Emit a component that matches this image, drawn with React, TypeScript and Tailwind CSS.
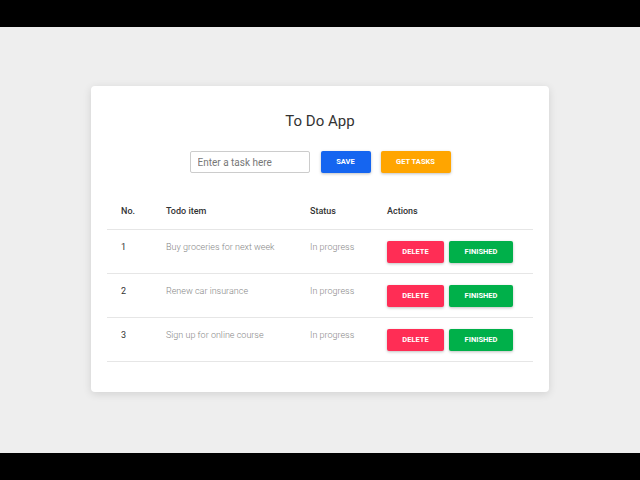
import React from 'react';

interface Task {
    id: number;
    title: string;
    status: string;
}

const tasks: Task[] = [
    { id: 1, title: 'Buy groceries for next week', status: 'In progress' },
    { id: 2, title: 'Renew car insurance', status: 'In progress' },
    { id: 3, title: 'Sign up for online course', status: 'In progress' },
];

const cols = 'grid grid-cols-[45px_144px_77px_1fr]';

export default function App() {
    return (
        <div className="flex h-[480px] flex-col bg-black font-['Roboto',sans-serif]">
            <div className="h-[27px] shrink-0" />
            <main className="flex h-[426px] shrink-0 items-start justify-center bg-[#eeeeee] pt-[59px]">
                <div className="w-[458px] rounded-[4px] bg-white px-4 pb-[30px] pt-[26px] shadow-[0_2px_8px_rgba(0,0,0,0.12)]">
                    <h1 className="text-center text-[15px] leading-[18px] text-[#333333]">To Do App</h1>

                    <div className="mt-[21px] flex items-center justify-center">
                        <input
                            type="text"
                            placeholder="Enter a task here"
                            className="h-[22px] w-[120px] rounded-[2px] border border-[#cccccc] px-[7px] text-[10px] text-[#333] placeholder:text-[#777] focus:outline-none"
                        />
                        <button
                            type="button"
                            className="ml-[11px] h-[22px] w-[50px] rounded-[2px] bg-[#1565f0] text-[7.5px] font-bold text-white shadow-[0_1px_3px_rgba(0,0,0,0.25)]"
                        >
                            SAVE
                        </button>
                        <button
                            type="button"
                            className="ml-[10px] h-[22px] w-[70px] rounded-[2px] bg-[#ffa500] text-[7.5px] font-bold text-white shadow-[0_1px_3px_rgba(0,0,0,0.25)]"
                        >
                            GET TASKS
                        </button>
                    </div>

                    <div className="mt-[21px]">
                        <div className={`${cols} h-[36px] items-center border-b border-[#e6e6e6] pl-[14px] text-[9px] font-medium text-[#333333]`}>
                            <span>No.</span>
                            <span>Todo item</span>
                            <span>Status</span>
                            <span>Actions</span>
                        </div>
                        {tasks.map((task) => (
                            <div
                                key={task.id}
                                className={`${cols} h-[44px] items-start border-b border-[#e6e6e6] pl-[14px] pt-[11px] text-[9px]`}
                            >
                                <span className="leading-[12px] text-[#333333]">{task.id}</span>
                                <span className="leading-[12px] font-light text-[#888888]">{task.title}</span>
                                <span className="leading-[12px] font-light text-[#888888]">{task.status}</span>
                                <div className="flex gap-[5px]">
                                    <button
                                        type="button"
                                        className="h-[22px] w-[57px] rounded-[2px] bg-[#ff2d55] text-[7.5px] font-bold text-white shadow-[0_1px_3px_rgba(0,0,0,0.25)]"
                                    >
                                        DELETE
                                    </button>
                                    <button
                                        type="button"
                                        className="h-[22px] w-[64px] rounded-[2px] bg-[#00b04a] text-[7.5px] font-bold text-white shadow-[0_1px_3px_rgba(0,0,0,0.25)]"
                                    >
                                        FINISHED
                                    </button>
                                </div>
                            </div>
                        ))}
                    </div>
                </div>
            </main>
            <div className="h-[27px] shrink-0" />
        </div>
    );
}
